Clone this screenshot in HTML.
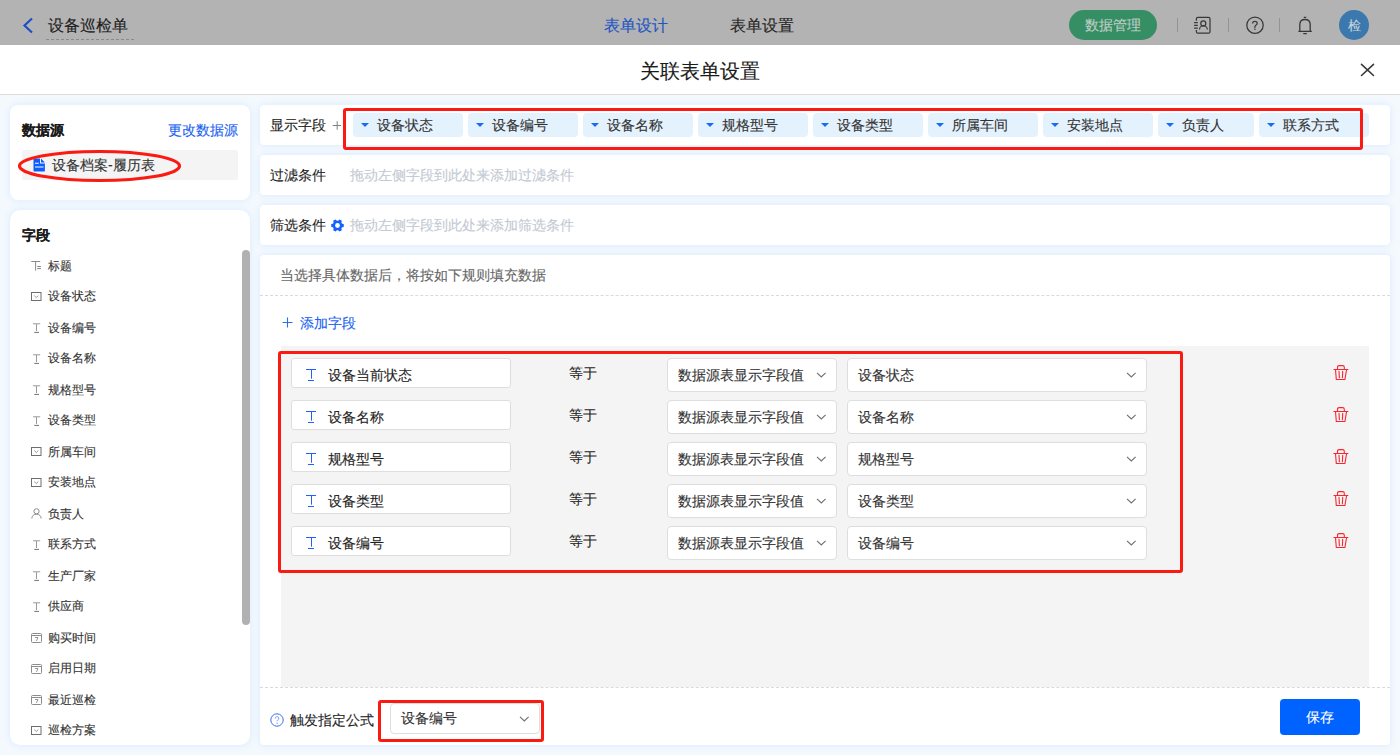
<!DOCTYPE html>
<html><head><meta charset="utf-8">
<style>
*{box-sizing:border-box;margin:0;padding:0}
html,body{width:1400px;height:755px;overflow:hidden}
body{position:relative;font-family:"Liberation Sans",sans-serif;background:#f4f9fe;color:#222;-webkit-text-stroke:0.12px}
.a{position:absolute;white-space:nowrap}
.t12{font-size:12px;line-height:20px}
.t14{font-size:14px;line-height:20px}
.t16{font-size:16px;line-height:20px}
#top{position:absolute;left:0;top:0;width:1400px;height:45px;background:#b3b3b3}
#mh{position:absolute;left:0;top:45px;width:1400px;height:50px;background:#fff;border-bottom:1px solid #dcdcdc}
.card{position:absolute;background:#fff;box-shadow:0 0 7px 1px rgba(0,125,240,0.09)}
.chip{position:absolute;top:113px;height:24px;background:#e4f2fe;border-radius:4px}
.chip .tri{position:absolute;left:8px;top:10px;width:0;height:0;border-left:4.5px solid transparent;border-right:4.5px solid transparent;border-top:4.5px solid #1a6af2}
.chip .tx{position:absolute;left:24px;top:2px;font-size:14px;line-height:20px;color:#333}
.red{position:absolute;border:3px solid #fb1a12;border-radius:3px}
.fi{position:absolute;left:31px}
.ft{position:absolute;left:48px;font-size:12px;line-height:20px;color:#333}
.inp{position:absolute;left:291px;width:220px;height:30px;background:#fff;border:1px solid #dedede;border-radius:3px}
.inp .ti{position:absolute;left:14px;top:9px}
.inp .tx{position:absolute;left:36px;top:6px;font-size:14px;line-height:20px;color:#1f1f1f}
.eq{position:absolute;left:569px;font-size:14px;line-height:20px;color:#1f1f1f}
.sel{position:absolute;background:#fff;border:1px solid #dedede;border-radius:4px;height:34px}
.sel .tx{position:absolute;left:10px;top:6px;font-size:14px;line-height:20px;color:#333}
.sel svg{position:absolute}
.trash{position:absolute;left:1333px}
</style></head><body>
<!-- top bar -->
<div id="top">
  <svg class="a" style="left:22px;top:17px" width="12" height="17" viewBox="0 0 12 17"><path d="M10 1.5 L2.5 8.5 L10 15.5" fill="none" stroke="#1d4fc4" stroke-width="2.2"/></svg>
  <div class="a t16" style="left:48px;top:16px;color:#1e1e1e">设备巡检单</div>
  <div class="a" style="left:46px;top:39px;width:88px;border-top:1px dashed #8a8a8a"></div>
  <div class="a t16" style="left:604px;top:16px;color:#1e55c4">表单设计</div>
  <div class="a t16" style="left:730px;top:16px;color:#262626">表单设置</div>
  <div class="a" style="left:1069px;top:10px;width:88px;height:30px;border-radius:15px;background:#368e64"></div>
  <div class="a t14" style="left:1085px;top:15px;color:#bfcdc5">数据管理</div>
  <div class="a" style="left:1177px;top:18px;width:1px;height:14px;background:#939393"></div>
  <div class="a" style="left:1228px;top:18px;width:1px;height:14px;background:#939393"></div>
  <div class="a" style="left:1279px;top:18px;width:1px;height:14px;background:#939393"></div>
  <svg class="a" style="left:1190px;top:14px" width="24" height="24" viewBox="0 0 24 24"><path d="M6.4 6.8V4.8Q6.4 3.3 7.9 3.3H18.5Q20 3.3 20 4.8V17.7Q20 19.2 18.5 19.2H7.9Q6.4 19.2 6.4 17.7V15.9M4.1 8.5H7.8M4.1 11.3H7.8M4.1 14.1H7.8M9.5 15.6A3.9 3.9 0 0 1 17.3 15.6" fill="none" stroke="#383838" stroke-width="1.25"/><circle cx="13.3" cy="9.4" r="2.5" fill="none" stroke="#383838" stroke-width="1.25"/></svg>
  <svg class="a" style="left:1243px;top:13px" width="24" height="24" viewBox="0 0 24 24"><circle cx="12" cy="12.2" r="8.2" fill="none" stroke="#383838" stroke-width="1.25"/><path d="M9.6 10.4Q9.6 8.4 12 8.4Q14.2 8.4 14.2 10.3Q14.2 11.6 12.8 12.3Q11.9 12.8 11.9 14V15" fill="none" stroke="#383838" stroke-width="1.25"/><circle cx="11.9" cy="16.3" r="0.8" fill="#383838"/></svg>
  <svg class="a" style="left:1293px;top:13px" width="24" height="24" viewBox="0 0 24 24"><path d="M5.4 18.3H18.8M6.8 17.8V11.5Q6.8 6.5 12 6.5Q17.2 6.5 17.2 11.5V17.8M10.8 4.3H13.2M10.3 20.6H13.8" fill="none" stroke="#383838" stroke-width="1.3"/></svg>
  <div class="a" style="left:1339px;top:10px;width:30px;height:30px;border-radius:15px;background:#3a78ad"></div>
  <div class="a" style="left:1339px;top:16px;width:30px;text-align:center;font-size:13px;line-height:20px;color:#c8d4dc">检</div>
</div>
<!-- modal header -->
<div id="mh">
  <div class="a" style="left:640px;top:16px;font-size:20px;line-height:20px;color:#1a1a1a">关联表单设置</div>
  <svg class="a" style="left:1359px;top:17px" width="17" height="17" viewBox="0 0 17 17"><path d="M2.5 2.3L14.5 13.5M14.5 2.3L2.5 13.5" stroke="#383838" stroke-width="1.6" stroke-linecap="round"/></svg>
</div>
<!-- left cards -->
<div class="card" style="left:10px;top:105px;width:240px;height:95px;border-radius:8px">
  <div class="a t14" style="left:12px;top:15px;font-weight:bold;color:#1a1a1a">数据源</div>
  <div class="a t14" style="left:158px;top:15px;color:#1a62f2">更改数据源</div>
  <div class="a" style="left:12px;top:45px;width:216px;height:30px;background:#f4f4f4;border-radius:2px"></div>
  <svg class="a" style="left:23px;top:53px" width="12" height="14" viewBox="0 0 12 14"><path d="M0.5 1.2q0-.7.7-.7h5.8v4.9h4.9v7.4q0 .7-.7.7H1.2q-.7 0-.7-.7z" fill="#0d5efe"/><path d="M8 0.6l3.9 3.9H8z" fill="#0d5efe"/><path d="M2 5.2h3.7M2 9h8.5" stroke="#fff" stroke-width="1.1"/></svg>
  <div class="a t14" style="left:42px;top:50px;color:#333">设备档案-履历表</div>
</div>
<svg class="a" style="left:15px;top:148px" width="170" height="36" viewBox="0 0 170 36"><ellipse cx="84.5" cy="18" rx="80" ry="14.5" fill="none" stroke="#fb1a12" stroke-width="3.2"/></svg>
<div class="card" style="left:10px;top:210px;width:240px;height:535px;border-radius:10px" id="lc2">
  <div class="a t14" style="left:12px;top:15px;font-weight:bold;color:#1a1a1a">字段</div>
  <div class="a" style="left:232px;top:40px;width:8px;height:375px;border-radius:4px;background:#b1b1b1"></div>
</div>
<!-- right cards -->
<div class="card" style="left:260px;top:105px;width:1130px;height:40px;border-radius:4px">
  <div class="a t14" style="left:10px;top:10px;color:#1f1f1f">显示字段</div>
  <svg class="a" style="left:72px;top:16px" width="10" height="10" viewBox="0 0 10 10"><path d="M0.7 4.5h8.4M5.2 0.2v8.6" stroke="#808080" stroke-width="1"/></svg>
</div>
<div class="card" style="left:260px;top:155px;width:1130px;height:40px;border-radius:4px">
  <div class="a t14" style="left:10px;top:10px;color:#1f1f1f">过滤条件</div>
  <div class="a t14" style="left:90px;top:10px;color:#c3c9d3">拖动左侧字段到此处来添加过滤条件</div>
</div>
<div class="card" style="left:260px;top:205px;width:1130px;height:40px;border-radius:4px">
  <div class="a t14" style="left:10px;top:10px;color:#1f1f1f">筛选条件</div>
  <svg class="a" style="left:71px;top:14px" width="13" height="13" viewBox="0 0 13 13"><path d="M11.04 4.66 L12.74 5.06 L12.74 7.94 L11.04 8.34 L10.36 9.52 L10.86 11.18 L8.37 12.62 L7.18 11.35 L5.82 11.35 L4.63 12.62 L2.14 11.18 L2.64 9.52 L1.96 8.34 L0.26 7.94 L0.26 5.06 L1.96 4.66 L2.64 3.48 L2.14 1.82 L4.63 0.38 L5.82 1.65 L7.18 1.65 L8.37 0.38 L10.86 1.82 L10.36 3.48Z" fill="#1262ff"/><circle cx="6.5" cy="6.5" r="2.4" fill="#fff"/></svg>
  <div class="a t14" style="left:90px;top:10px;color:#c3c9d3">拖动左侧字段到此处来添加筛选条件</div>
</div>
<div class="card" style="left:260px;top:255px;width:1130px;height:490px;border-radius:4px" id="main">
  <div class="a t14" style="left:20px;top:10px;color:#666">当选择具体数据后，将按如下规则填充数据</div>
  <div class="a" style="left:0;top:40px;width:1130px;border-top:1px dashed #dadada"></div>
  <svg class="a" style="left:22px;top:62px" width="11" height="11" viewBox="0 0 11 11"><path d="M0.5 5.5h10M5.5 0.5v10" stroke="#2a6df4" stroke-width="1.1"/></svg>
  <div class="a t14" style="left:40px;top:58px;color:#1a62f2">添加字段</div>
  <div class="a" style="left:21px;top:91px;width:1088px;height:341px;background:#f4f4f4"></div>
  <div class="a" style="left:0;top:432px;width:1130px;border-top:1px dashed #dadada"></div>
  <svg class="a" style="left:10px;top:458px" width="14" height="14" viewBox="0 0 14 14"><circle cx="7" cy="7" r="6.2" fill="none" stroke="#3a6ef5" stroke-width="1"/><path d="M5.2 5.5c0-1 .8-1.8 1.8-1.8s1.8.7 1.8 1.7c0 1.3-1.7 1.4-1.7 2.8" fill="none" stroke="#5a86f5" stroke-width="0.9"/><circle cx="7.1" cy="10.2" r="0.6" fill="#5a86f5"/></svg>
  <div class="a t14" style="left:30px;top:455px;color:#1f1f1f">触发指定公式</div>
  <div class="a" style="left:1020px;top:444px;width:80px;height:36px;border-radius:4px;background:#0062ff"></div>
  <div class="a t14" style="left:1020px;top:452px;width:80px;text-align:center;color:#fff">保存</div>
</div>
<div id="rows"><div class="inp" style="top:358px"><svg class="ti" width="11" height="14" viewBox="0 0 11 14"><path d="M0 1.5h10M5.5 1.5v9.2M2 12.5h6" stroke="#1f5fff" stroke-width="1"/></svg><div class="tx">设备当前状态</div></div><div class="eq" style="top:363px">等于</div><div class="sel" style="left:667px;top:358px;width:170px"><div class="tx">数据源表显示字段值</div><svg style="left:148px;top:13px" width="12" height="8" viewBox="0 0 12 8"><path d="M1 0.8L5.3 5 9.6 0.8" fill="none" stroke="#707070" stroke-width="1.1"/></svg></div><div class="sel" style="left:847px;top:358px;width:300px"><div class="tx">设备状态</div><svg style="left:278px;top:13px" width="12" height="8" viewBox="0 0 12 8"><path d="M1 0.8L5.3 5 9.6 0.8" fill="none" stroke="#707070" stroke-width="1.1"/></svg></div><svg class="trash" style="top:365px" width="16" height="16" viewBox="0 0 16 16"><path d="M0.9 4.5h14M4.5 4.5V2.2q0-1.6 1.6-1.6h3.6q1.6 0 1.6 1.6V4.5M2.5 4.5L3.3 14.5h8.6L13.6 4.5M6 6.2L6.4 12.6M9.7 6.2L9.4 12.6" fill="none" stroke="#fb2530" stroke-width="1.1" stroke-linecap="round"/></svg><div class="inp" style="top:400px"><svg class="ti" width="11" height="14" viewBox="0 0 11 14"><path d="M0 1.5h10M5.5 1.5v9.2M2 12.5h6" stroke="#1f5fff" stroke-width="1"/></svg><div class="tx">设备名称</div></div><div class="eq" style="top:405px">等于</div><div class="sel" style="left:667px;top:400px;width:170px"><div class="tx">数据源表显示字段值</div><svg style="left:148px;top:13px" width="12" height="8" viewBox="0 0 12 8"><path d="M1 0.8L5.3 5 9.6 0.8" fill="none" stroke="#707070" stroke-width="1.1"/></svg></div><div class="sel" style="left:847px;top:400px;width:300px"><div class="tx">设备名称</div><svg style="left:278px;top:13px" width="12" height="8" viewBox="0 0 12 8"><path d="M1 0.8L5.3 5 9.6 0.8" fill="none" stroke="#707070" stroke-width="1.1"/></svg></div><svg class="trash" style="top:407px" width="16" height="16" viewBox="0 0 16 16"><path d="M0.9 4.5h14M4.5 4.5V2.2q0-1.6 1.6-1.6h3.6q1.6 0 1.6 1.6V4.5M2.5 4.5L3.3 14.5h8.6L13.6 4.5M6 6.2L6.4 12.6M9.7 6.2L9.4 12.6" fill="none" stroke="#fb2530" stroke-width="1.1" stroke-linecap="round"/></svg><div class="inp" style="top:442px"><svg class="ti" width="11" height="14" viewBox="0 0 11 14"><path d="M0 1.5h10M5.5 1.5v9.2M2 12.5h6" stroke="#1f5fff" stroke-width="1"/></svg><div class="tx">规格型号</div></div><div class="eq" style="top:447px">等于</div><div class="sel" style="left:667px;top:442px;width:170px"><div class="tx">数据源表显示字段值</div><svg style="left:148px;top:13px" width="12" height="8" viewBox="0 0 12 8"><path d="M1 0.8L5.3 5 9.6 0.8" fill="none" stroke="#707070" stroke-width="1.1"/></svg></div><div class="sel" style="left:847px;top:442px;width:300px"><div class="tx">规格型号</div><svg style="left:278px;top:13px" width="12" height="8" viewBox="0 0 12 8"><path d="M1 0.8L5.3 5 9.6 0.8" fill="none" stroke="#707070" stroke-width="1.1"/></svg></div><svg class="trash" style="top:449px" width="16" height="16" viewBox="0 0 16 16"><path d="M0.9 4.5h14M4.5 4.5V2.2q0-1.6 1.6-1.6h3.6q1.6 0 1.6 1.6V4.5M2.5 4.5L3.3 14.5h8.6L13.6 4.5M6 6.2L6.4 12.6M9.7 6.2L9.4 12.6" fill="none" stroke="#fb2530" stroke-width="1.1" stroke-linecap="round"/></svg><div class="inp" style="top:484px"><svg class="ti" width="11" height="14" viewBox="0 0 11 14"><path d="M0 1.5h10M5.5 1.5v9.2M2 12.5h6" stroke="#1f5fff" stroke-width="1"/></svg><div class="tx">设备类型</div></div><div class="eq" style="top:489px">等于</div><div class="sel" style="left:667px;top:484px;width:170px"><div class="tx">数据源表显示字段值</div><svg style="left:148px;top:13px" width="12" height="8" viewBox="0 0 12 8"><path d="M1 0.8L5.3 5 9.6 0.8" fill="none" stroke="#707070" stroke-width="1.1"/></svg></div><div class="sel" style="left:847px;top:484px;width:300px"><div class="tx">设备类型</div><svg style="left:278px;top:13px" width="12" height="8" viewBox="0 0 12 8"><path d="M1 0.8L5.3 5 9.6 0.8" fill="none" stroke="#707070" stroke-width="1.1"/></svg></div><svg class="trash" style="top:491px" width="16" height="16" viewBox="0 0 16 16"><path d="M0.9 4.5h14M4.5 4.5V2.2q0-1.6 1.6-1.6h3.6q1.6 0 1.6 1.6V4.5M2.5 4.5L3.3 14.5h8.6L13.6 4.5M6 6.2L6.4 12.6M9.7 6.2L9.4 12.6" fill="none" stroke="#fb2530" stroke-width="1.1" stroke-linecap="round"/></svg><div class="inp" style="top:526px"><svg class="ti" width="11" height="14" viewBox="0 0 11 14"><path d="M0 1.5h10M5.5 1.5v9.2M2 12.5h6" stroke="#1f5fff" stroke-width="1"/></svg><div class="tx">设备编号</div></div><div class="eq" style="top:531px">等于</div><div class="sel" style="left:667px;top:526px;width:170px"><div class="tx">数据源表显示字段值</div><svg style="left:148px;top:13px" width="12" height="8" viewBox="0 0 12 8"><path d="M1 0.8L5.3 5 9.6 0.8" fill="none" stroke="#707070" stroke-width="1.1"/></svg></div><div class="sel" style="left:847px;top:526px;width:300px"><div class="tx">设备编号</div><svg style="left:278px;top:13px" width="12" height="8" viewBox="0 0 12 8"><path d="M1 0.8L5.3 5 9.6 0.8" fill="none" stroke="#707070" stroke-width="1.1"/></svg></div><svg class="trash" style="top:533px" width="16" height="16" viewBox="0 0 16 16"><path d="M0.9 4.5h14M4.5 4.5V2.2q0-1.6 1.6-1.6h3.6q1.6 0 1.6 1.6V4.5M2.5 4.5L3.3 14.5h8.6L13.6 4.5M6 6.2L6.4 12.6M9.7 6.2L9.4 12.6" fill="none" stroke="#fb2530" stroke-width="1.1" stroke-linecap="round"/></svg></div>
<div id="fields"><svg class="fi" style="top:260px" width="11" height="11" viewBox="0 0 11 11"><path d="M0.3 1.5h8.9M4.6 1.5v9.2" stroke="#8c8c8c" stroke-width="1"/><path d="M6.3 6.5h3.6M6.3 8.6h3.6" stroke="#707070" stroke-width="0.9"/></svg><div class="ft" style="top:256px">标题</div><svg class="fi" style="top:291px" width="11" height="11" viewBox="0 0 11 11"><rect x="0.5" y="1.5" width="9.5" height="8" fill="none" stroke="#6e6e6e" stroke-width="1"/><path d="M3.3 4.6l2 1.9 2-1.9" fill="none" stroke="#8c8c8c" stroke-width="0.9"/></svg><div class="ft" style="top:286px">设备状态</div><svg class="fi" style="top:322px" width="11" height="12" viewBox="0 0 11 12"><path d="M2 1.8h7.2M5.5 1.8v7.2" stroke="#9a9a9a" stroke-width="1"/><path d="M3.3 10.4h4.7" stroke="#707070" stroke-width="1"/></svg><div class="ft" style="top:318px">设备编号</div><svg class="fi" style="top:353px" width="11" height="12" viewBox="0 0 11 12"><path d="M2 1.8h7.2M5.5 1.8v7.2" stroke="#9a9a9a" stroke-width="1"/><path d="M3.3 10.4h4.7" stroke="#707070" stroke-width="1"/></svg><div class="ft" style="top:348px">设备名称</div><svg class="fi" style="top:384px" width="11" height="12" viewBox="0 0 11 12"><path d="M2 1.8h7.2M5.5 1.8v7.2" stroke="#9a9a9a" stroke-width="1"/><path d="M3.3 10.4h4.7" stroke="#707070" stroke-width="1"/></svg><div class="ft" style="top:380px">规格型号</div><svg class="fi" style="top:415px" width="11" height="12" viewBox="0 0 11 12"><path d="M2 1.8h7.2M5.5 1.8v7.2" stroke="#9a9a9a" stroke-width="1"/><path d="M3.3 10.4h4.7" stroke="#707070" stroke-width="1"/></svg><div class="ft" style="top:410px">设备类型</div><svg class="fi" style="top:446px" width="11" height="11" viewBox="0 0 11 11"><rect x="0.5" y="1.5" width="9.5" height="8" fill="none" stroke="#6e6e6e" stroke-width="1"/><path d="M3.3 4.6l2 1.9 2-1.9" fill="none" stroke="#8c8c8c" stroke-width="0.9"/></svg><div class="ft" style="top:442px">所属车间</div><svg class="fi" style="top:477px" width="11" height="11" viewBox="0 0 11 11"><rect x="0.5" y="1.5" width="9.5" height="8" fill="none" stroke="#6e6e6e" stroke-width="1"/><path d="M3.3 4.6l2 1.9 2-1.9" fill="none" stroke="#8c8c8c" stroke-width="0.9"/></svg><div class="ft" style="top:472px">安装地点</div><svg class="fi" style="top:508px" width="11" height="11" viewBox="0 0 11 11"><circle cx="5.5" cy="3.3" r="2.6" fill="none" stroke="#8c8c8c" stroke-width="1"/><path d="M0.8 10.5c0.3-2.8 2-4.3 4.7-4.3s4.4 1.5 4.7 4.3" fill="none" stroke="#8c8c8c" stroke-width="1"/></svg><div class="ft" style="top:504px">负责人</div><svg class="fi" style="top:539px" width="11" height="12" viewBox="0 0 11 12"><path d="M2 1.8h7.2M5.5 1.8v7.2" stroke="#9a9a9a" stroke-width="1"/><path d="M3.3 10.4h4.7" stroke="#707070" stroke-width="1"/></svg><div class="ft" style="top:534px">联系方式</div><svg class="fi" style="top:570px" width="11" height="12" viewBox="0 0 11 12"><path d="M2 1.8h7.2M5.5 1.8v7.2" stroke="#9a9a9a" stroke-width="1"/><path d="M3.3 10.4h4.7" stroke="#707070" stroke-width="1"/></svg><div class="ft" style="top:566px">生产厂家</div><svg class="fi" style="top:601px" width="11" height="12" viewBox="0 0 11 12"><path d="M2 1.8h7.2M5.5 1.8v7.2" stroke="#9a9a9a" stroke-width="1"/><path d="M3.3 10.4h4.7" stroke="#707070" stroke-width="1"/></svg><div class="ft" style="top:596px">供应商</div><svg class="fi" style="top:632px" width="11" height="11" viewBox="0 0 11 11"><rect x="0.5" y="1.5" width="10" height="9" rx="1" fill="none" stroke="#8c8c8c" stroke-width="1"/><path d="M0.5 3.5h10" stroke="#8c8c8c" stroke-width="1"/><path d="M4 5.5h3l-1.6 3.5" fill="none" stroke="#8c8c8c" stroke-width="0.9"/></svg><div class="ft" style="top:628px">购买时间</div><svg class="fi" style="top:663px" width="11" height="11" viewBox="0 0 11 11"><rect x="0.5" y="1.5" width="10" height="9" rx="1" fill="none" stroke="#8c8c8c" stroke-width="1"/><path d="M0.5 3.5h10" stroke="#8c8c8c" stroke-width="1"/><path d="M4 5.5h3l-1.6 3.5" fill="none" stroke="#8c8c8c" stroke-width="0.9"/></svg><div class="ft" style="top:658px">启用日期</div><svg class="fi" style="top:694px" width="11" height="11" viewBox="0 0 11 11"><rect x="0.5" y="1.5" width="10" height="9" rx="1" fill="none" stroke="#8c8c8c" stroke-width="1"/><path d="M0.5 3.5h10" stroke="#8c8c8c" stroke-width="1"/><path d="M4 5.5h3l-1.6 3.5" fill="none" stroke="#8c8c8c" stroke-width="0.9"/></svg><div class="ft" style="top:690px">最近巡检</div><svg class="fi" style="top:725px" width="11" height="11" viewBox="0 0 11 11"><rect x="0.5" y="1.5" width="9.5" height="8" fill="none" stroke="#6e6e6e" stroke-width="1"/><path d="M3.3 4.6l2 1.9 2-1.9" fill="none" stroke="#8c8c8c" stroke-width="0.9"/></svg><div class="ft" style="top:720px">巡检方案</div></div>
<div id="chips"><div class="chip" style="left:353px;width:110px"><div class="tri"></div><div class="tx">设备状态</div></div><div class="chip" style="left:468px;width:110px"><div class="tri"></div><div class="tx">设备编号</div></div><div class="chip" style="left:583px;width:110px"><div class="tri"></div><div class="tx">设备名称</div></div><div class="chip" style="left:698px;width:110px"><div class="tri"></div><div class="tx">规格型号</div></div><div class="chip" style="left:813px;width:110px"><div class="tri"></div><div class="tx">设备类型</div></div><div class="chip" style="left:928px;width:110px"><div class="tri"></div><div class="tx">所属车间</div></div><div class="chip" style="left:1043px;width:110px"><div class="tri"></div><div class="tx">安装地点</div></div><div class="chip" style="left:1158px;width:96px"><div class="tri"></div><div class="tx">负责人</div></div><div class="chip" style="left:1259px;width:110px"><div class="tri"></div><div class="tx">联系方式</div></div></div>
<!-- bottom select -->
<div class="sel" style="left:390px;top:703px;width:150px;height:31px">
  <div class="tx" style="top:4px">设备编号</div>
  <svg style="left:128px;top:12px" width="12" height="8" viewBox="0 0 12 8"><path d="M1 0.8L5.3 5 9.6 0.8" fill="none" stroke="#707070" stroke-width="1.1"/></svg>
</div>
<div class="red" style="left:378px;top:700px;width:166px;height:42px"></div>
<div class="red" style="left:343px;top:108px;width:1020px;height:42px"></div>
<div class="red" style="left:278px;top:351px;width:905px;height:222px"></div>
</body></html>
